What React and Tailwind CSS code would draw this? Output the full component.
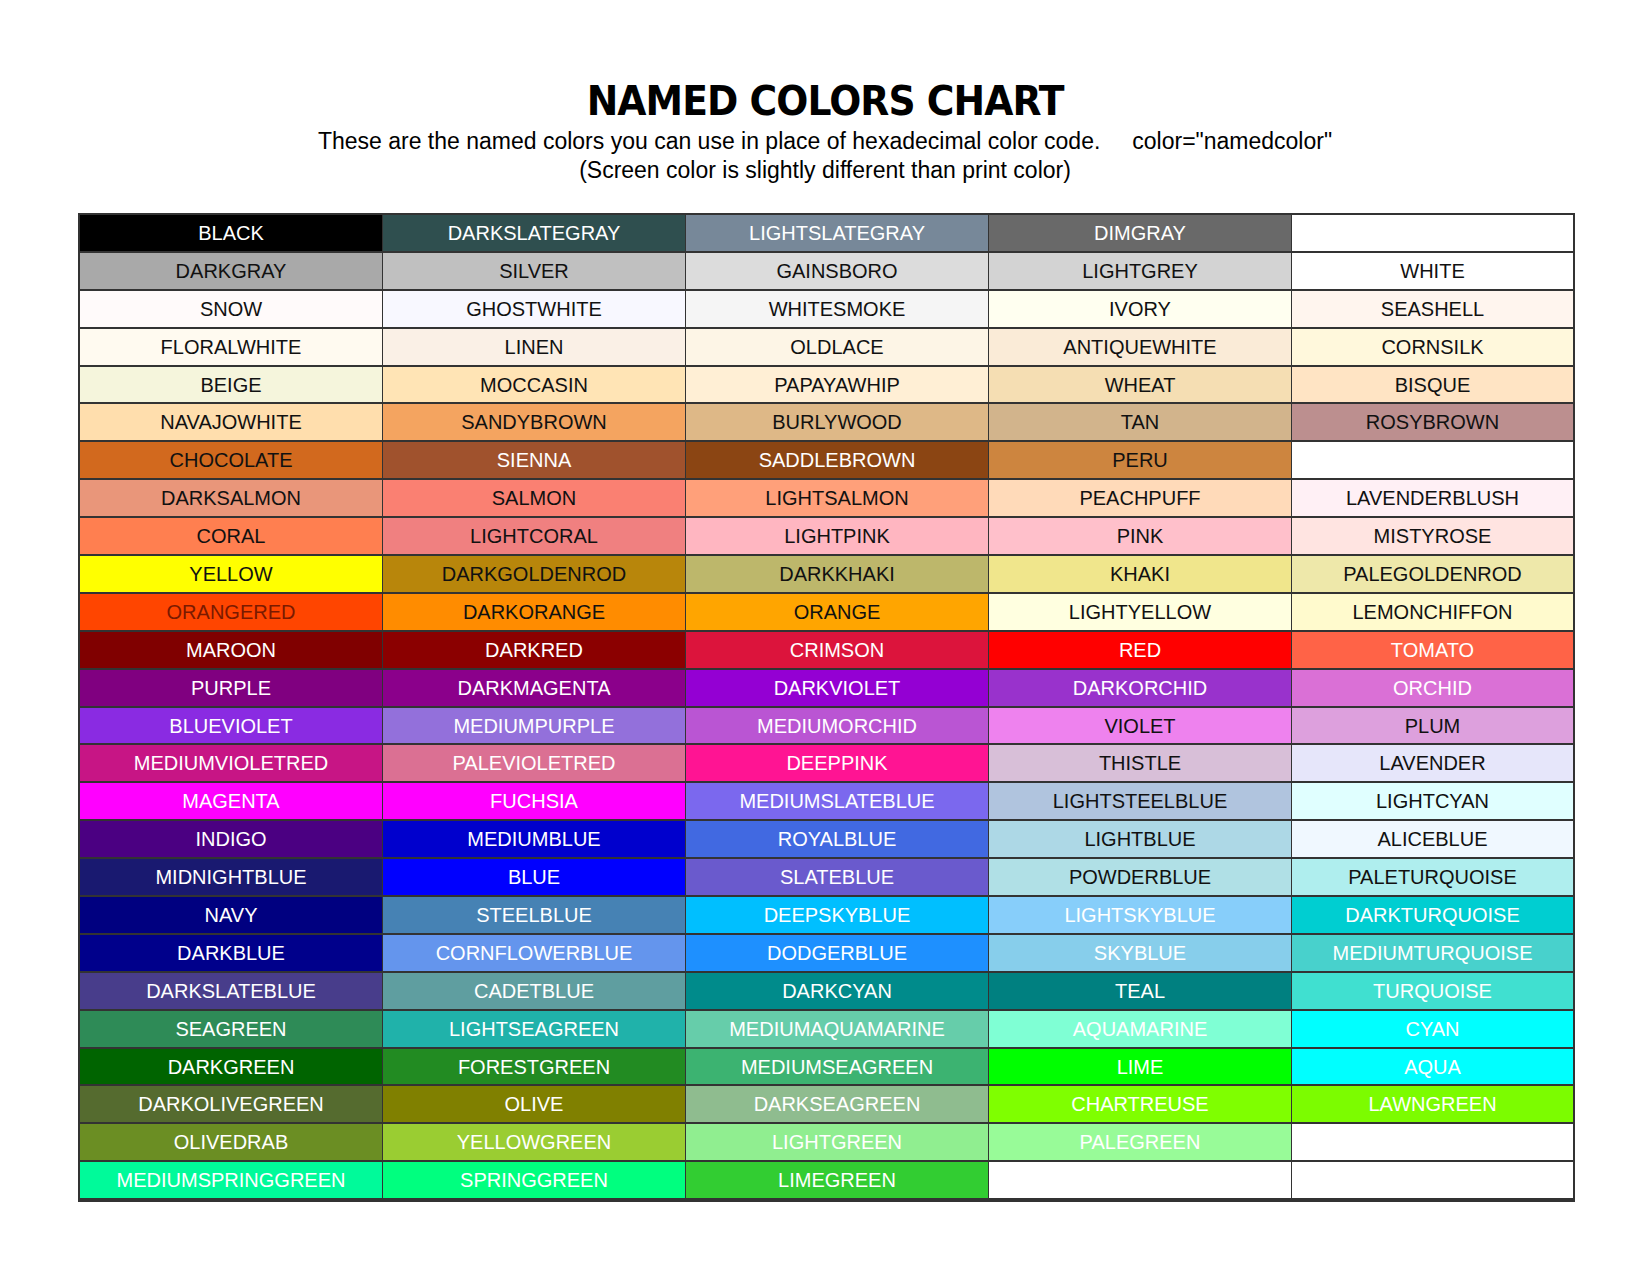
const rows = [
  ['BLACK', 'DARKSLATEGRAY', 'LIGHTSLATEGRAY', 'DIMGRAY', ''],
  ['DARKGRAY', 'SILVER', 'GAINSBORO', 'LIGHTGREY', 'WHITE'],
  ['SNOW', 'GHOSTWHITE', 'WHITESMOKE', 'IVORY', 'SEASHELL'],
  ['FLORALWHITE', 'LINEN', 'OLDLACE', 'ANTIQUEWHITE', 'CORNSILK'],
  ['BEIGE', 'MOCCASIN', 'PAPAYAWHIP', 'WHEAT', 'BISQUE'],
  ['NAVAJOWHITE', 'SANDYBROWN', 'BURLYWOOD', 'TAN', 'ROSYBROWN'],
  ['CHOCOLATE', 'SIENNA', 'SADDLEBROWN', 'PERU', ''],
  ['DARKSALMON', 'SALMON', 'LIGHTSALMON', 'PEACHPUFF', 'LAVENDERBLUSH'],
  ['CORAL', 'LIGHTCORAL', 'LIGHTPINK', 'PINK', 'MISTYROSE'],
  ['YELLOW', 'DARKGOLDENROD', 'DARKKHAKI', 'KHAKI', 'PALEGOLDENROD'],
  ['ORANGERED', 'DARKORANGE', 'ORANGE', 'LIGHTYELLOW', 'LEMONCHIFFON'],
  ['MAROON', 'DARKRED', 'CRIMSON', 'RED', 'TOMATO'],
  ['PURPLE', 'DARKMAGENTA', 'DARKVIOLET', 'DARKORCHID', 'ORCHID'],
  ['BLUEVIOLET', 'MEDIUMPURPLE', 'MEDIUMORCHID', 'VIOLET', 'PLUM'],
  ['MEDIUMVIOLETRED', 'PALEVIOLETRED', 'DEEPPINK', 'THISTLE', 'LAVENDER'],
  ['MAGENTA', 'FUCHSIA', 'MEDIUMSLATEBLUE', 'LIGHTSTEELBLUE', 'LIGHTCYAN'],
  ['INDIGO', 'MEDIUMBLUE', 'ROYALBLUE', 'LIGHTBLUE', 'ALICEBLUE'],
  ['MIDNIGHTBLUE', 'BLUE', 'SLATEBLUE', 'POWDERBLUE', 'PALETURQUOISE'],
  ['NAVY', 'STEELBLUE', 'DEEPSKYBLUE', 'LIGHTSKYBLUE', 'DARKTURQUOISE'],
  ['DARKBLUE', 'CORNFLOWERBLUE', 'DODGERBLUE', 'SKYBLUE', 'MEDIUMTURQUOISE'],
  ['DARKSLATEBLUE', 'CADETBLUE', 'DARKCYAN', 'TEAL', 'TURQUOISE'],
  ['SEAGREEN', 'LIGHTSEAGREEN', 'MEDIUMAQUAMARINE', 'AQUAMARINE', 'CYAN'],
  ['DARKGREEN', 'FORESTGREEN', 'MEDIUMSEAGREEN', 'LIME', 'AQUA'],
  ['DARKOLIVEGREEN', 'OLIVE', 'DARKSEAGREEN', 'CHARTREUSE', 'LAWNGREEN'],
  ['OLIVEDRAB', 'YELLOWGREEN', 'LIGHTGREEN', 'PALEGREEN', ''],
  ['MEDIUMSPRINGGREEN', 'SPRINGGREEN', 'LIMEGREEN', '', ''],
];

// cells that use black text (everything else is white)
const darkText = new Set([
  'DARKGRAY', 'SILVER', 'GAINSBORO', 'LIGHTGREY', 'WHITE',
  'SNOW', 'GHOSTWHITE', 'WHITESMOKE', 'IVORY', 'SEASHELL',
  'FLORALWHITE', 'LINEN', 'OLDLACE', 'ANTIQUEWHITE', 'CORNSILK',
  'BEIGE', 'MOCCASIN', 'PAPAYAWHIP', 'WHEAT', 'BISQUE',
  'NAVAJOWHITE', 'SANDYBROWN', 'BURLYWOOD', 'TAN', 'ROSYBROWN',
  'CHOCOLATE', 'PERU',
  'DARKSALMON', 'SALMON', 'LIGHTSALMON', 'PEACHPUFF', 'LAVENDERBLUSH',
  'CORAL', 'LIGHTCORAL', 'LIGHTPINK', 'PINK', 'MISTYROSE',
  'YELLOW', 'DARKGOLDENROD', 'DARKKHAKI', 'KHAKI', 'PALEGOLDENROD',
  'DARKORANGE', 'ORANGE', 'LIGHTYELLOW', 'LEMONCHIFFON',
  'VIOLET', 'PLUM', 'THISTLE', 'LAVENDER', 'LIGHTSTEELBLUE', 'LIGHTCYAN',
  'LIGHTBLUE', 'ALICEBLUE', 'POWDERBLUE', 'PALETURQUOISE',
]);

function textColor(name) {
  if (name === 'ORANGERED') return '#7a1a00';
  return darkText.has(name) ? '#111' : '#fff';
}

export default function App() {
  return (
    <div className="w-[1650px] h-[1275px] bg-white" style={{ fontFamily: '"Liberation Sans", Arial, sans-serif' }}>
      <div className="pt-[78px] flex flex-col items-center text-black">
        <h1 className="text-[41px] leading-[46px] font-bold tracking-tight" style={{ fontFamily: '"DejaVu Sans", sans-serif', transform: 'scaleX(0.92)' }}>
          NAMED COLORS CHART
        </h1>
        <p className="text-[23px] leading-[30px] mt-[2px] whitespace-pre">
          These are the named colors you can use in place of hexadecimal color code.{'     '}color="namedcolor"
        </p>
        <p className="text-[23px] leading-[28px]">(Screen color is slightly different than print color)</p>
      </div>
      <div className="ml-[78px] mt-[29px] w-[1497px] border-2 border-[#333] grid grid-cols-[303px_303px_303px_303px_1fr]">
        {rows.flat().map((name, i) => (
          <div
            key={i}
            className="h-[37.9px] flex items-center justify-center text-[20px] border-r border-b-2 border-[#333] last:border-r-0 [&:nth-child(5n)]:border-r-0"
            style={{ backgroundColor: name ? name.toLowerCase() : '#fff', color: textColor(name) }}
          >
            {name}
          </div>
        ))}
      </div>
    </div>
  );
}
